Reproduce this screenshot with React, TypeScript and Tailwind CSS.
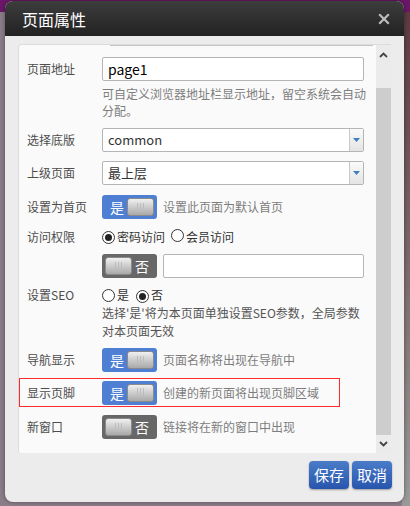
import React from "react";

const font = { fontFamily: '"Noto Sans CJK SC", "Liberation Sans", sans-serif' };

function Knob() {
  return (
    <div className="flex h-[18px] w-[27px] items-center justify-center gap-[2px] rounded-[3px] border border-[#8a8a8a] bg-gradient-to-b from-[#f0f0f0] to-[#a9a9a9]">
      <span className="h-[9px] w-px bg-[#bcbcbc]" />
      <span className="h-[9px] w-px bg-[#bcbcbc]" />
      <span className="h-[9px] w-px bg-[#bcbcbc]" />
    </div>
  );
}

function Toggle({ on }: { on: boolean }) {
  return on ? (
    <div className="flex h-[24px] w-[55px] shrink-0 items-center justify-between rounded-[3px] bg-[#4f7fd3] pl-[8px] pr-[3px]">
      <span className="text-[14px] leading-none text-white">是</span>
      <Knob />
    </div>
  ) : (
    <div className="flex h-[24px] w-[55px] shrink-0 items-center justify-between rounded-[3px] bg-[#676767] pl-[3px] pr-[8px]">
      <Knob />
      <span className="text-[14px] leading-none text-white">否</span>
    </div>
  );
}

function Radio({ checked }: { checked: boolean }) {
  return (
    <span className="inline-flex h-[13px] w-[13px] items-center justify-center rounded-full border border-[#333] bg-white">
      {checked && <span className="h-[7px] w-[7px] rounded-full bg-[#222]" />}
    </span>
  );
}

function Select({ value }: { value: string }) {
  return (
    <div className="flex h-[24px] w-[262px] items-stretch rounded-[2px] border border-[#b5b5b5] bg-white">
      <div className="flex flex-1 items-center pl-[5px] text-[13px] text-[#333]">{value}</div>
      <div className="flex w-[14px] items-center justify-center border-l border-[#c8c8c8] bg-gradient-to-b from-[#fafafa] to-[#e4e4e4]">
        <svg width="7" height="4" viewBox="0 0 7 4">
          <path d="M0 0h7L3.5 4z" fill="#3f7fbf" />
        </svg>
      </div>
    </div>
  );
}

function Label({ children }: { children: React.ReactNode }) {
  return <div className="w-[75px] shrink-0 text-[12px] text-[#4d4d4d]">{children}</div>;
}

export default function App() {
  return (
    <div className="relative h-[506px] w-[410px] overflow-hidden bg-[#8b7d88]" style={font}>
      <div className="h-[12px] bg-[#6a1767]" />
      <div className="ml-auto h-[494px] w-[8px] bg-gradient-to-b from-[#5c3b42] to-[#9a9a9a]" />
      <div className="absolute left-[5px] top-[1px] flex h-[501px] w-[399px] flex-col overflow-hidden rounded-[8px] bg-[#ececec] shadow-[0_0_4px_rgba(0,0,0,0.4)]">
        <div className="flex h-[35px] shrink-0 items-center justify-between bg-gradient-to-b from-[#3d3d3d] to-[#222] pl-[17px] pr-[14px]">
          <span className="text-[16px] leading-none text-white">页面属性</span>
          <svg width="12" height="12" viewBox="0 0 12 12">
            <path d="M1.2 1.2l9.6 9.6M10.8 1.2l-9.6 9.6" stroke="#bdbdbd" strokeWidth="2.2" />
          </svg>
        </div>
        <div className="ml-[13px] mt-[8px] flex h-[409px] w-[373px] overflow-hidden rounded-tl-[4px] rounded-bl-[3px] border-l border-t border-[#dcdcdc]">
          <div className="flex w-[358px] flex-col bg-[#fafafa] pl-[8px]">
            <div className="ml-[83px] h-px w-[263px] bg-[#c4c4c4]" />
            <div className="mt-[11px] flex items-start">
              <Label><div className="pt-[3px]">页面地址</div></Label>
              <div className="flex flex-col">
                <div className="flex h-[24px] w-[262px] items-center rounded-[2px] border border-[#b5b5b5] bg-white pl-[5px] text-[14px] text-black">page1</div>
                <div className="mt-[4px] w-[268px] text-[12px] leading-[17px] text-[#7d7d7d]">可自定义浏览器地址栏显示地址，留空系统会自动分配。</div>
              </div>
            </div>
            <div className="mt-[9px] flex items-center">
              <Label>选择底版</Label>
              <Select value="common" />
            </div>
            <div className="mt-[9px] flex items-center">
              <Label>上级页面</Label>
              <Select value="最上层" />
            </div>
            <div className="mt-[10px] flex items-center">
              <Label>设置为首页</Label>
              <Toggle on />
              <span className="ml-[6px] text-[12px] text-[#7d7d7d]">设置此页面为默认首页</span>
            </div>
            <div className="mt-[9px] flex items-center">
              <Label>访问权限</Label>
              <div className="flex items-center text-[12px] text-[#333]">
                <Radio checked />
                <span className="ml-[2px]">密码访问</span>
                <span className="ml-[6px]"><Radio checked={false} /></span>
                <span className="ml-[2px]">会员访问</span>
              </div>
            </div>
            <div className="mt-[8px] flex items-center">
              <div className="w-[75px] shrink-0" />
              <Toggle on={false} />
              <div className="ml-[6px] h-[24px] w-[201px] rounded-[2px] border border-[#b5b5b5] bg-white" />
            </div>
            <div className="mt-[8px] flex items-start">
              <Label>设置SEO</Label>
              <div className="flex flex-col text-[12px] text-[#333]">
                <div className="flex h-[18px] items-center">
                  <Radio checked={false} />
                  <span className="ml-[2px]">是</span>
                  <span className="ml-[7px]"><Radio checked /></span>
                  <span className="ml-[2px]">否</span>
                </div>
                <div className="w-[262px] text-[12px] leading-[18px] text-[#555]">选择'是'将为本页面单独设置SEO参数，全局参数对本页面无效</div>
              </div>
            </div>
            <div className="mt-[8px] flex items-center">
              <Label>导航显示</Label>
              <Toggle on />
              <span className="ml-[6px] text-[12px] text-[#7d7d7d]">页面名称将出现在导航中</span>
            </div>
            <div className="-ml-[8px] mt-[6px] flex h-[29px] w-[321px] items-center border border-[#ff2a2a] pl-[7px]">
              <Label>显示页脚</Label>
              <Toggle on />
              <span className="ml-[6px] text-[12px] text-[#7d7d7d]">创建的新页面将出现页脚区域</span>
            </div>
            <div className="mt-[8px] flex items-center">
              <Label>新窗口</Label>
              <Toggle on={false} />
              <span className="ml-[6px] text-[12px] text-[#7d7d7d]">链接将在新的窗口中出现</span>
            </div>
          </div>
          <div className="flex w-[15px] flex-col items-center bg-[#ebebeb]">
            <div className="flex h-[20px] items-center justify-center">
              <svg width="9" height="6" viewBox="0 0 9 6"><path d="M1 5l3.5-3.5L8 5" stroke="#444" strokeWidth="1.8" fill="none" /></svg>
            </div>
            <div className="mt-[23px] h-[348px] w-full bg-[#cdcdcd]" />
            <div className="flex h-[18px] items-center justify-center">
              <svg width="9" height="6" viewBox="0 0 9 6"><path d="M1 1l3.5 3.5L8 1" stroke="#444" strokeWidth="1.8" fill="none" /></svg>
            </div>
          </div>
        </div>
        <div className="mr-[12px] mt-[8px] flex justify-end gap-[3px]">
          <button className="h-[28px] w-[40px] rounded-[4px] bg-gradient-to-b from-[#4b7cc9] to-[#2755ad] text-[15px] text-white shadow-[0_1px_2px_rgba(0,0,0,0.35)]">保存</button>
          <button className="h-[28px] w-[40px] rounded-[4px] bg-gradient-to-b from-[#4b7cc9] to-[#2755ad] text-[15px] text-white shadow-[0_1px_2px_rgba(0,0,0,0.35)]">取消</button>
        </div>
      </div>
    </div>
  );
}
